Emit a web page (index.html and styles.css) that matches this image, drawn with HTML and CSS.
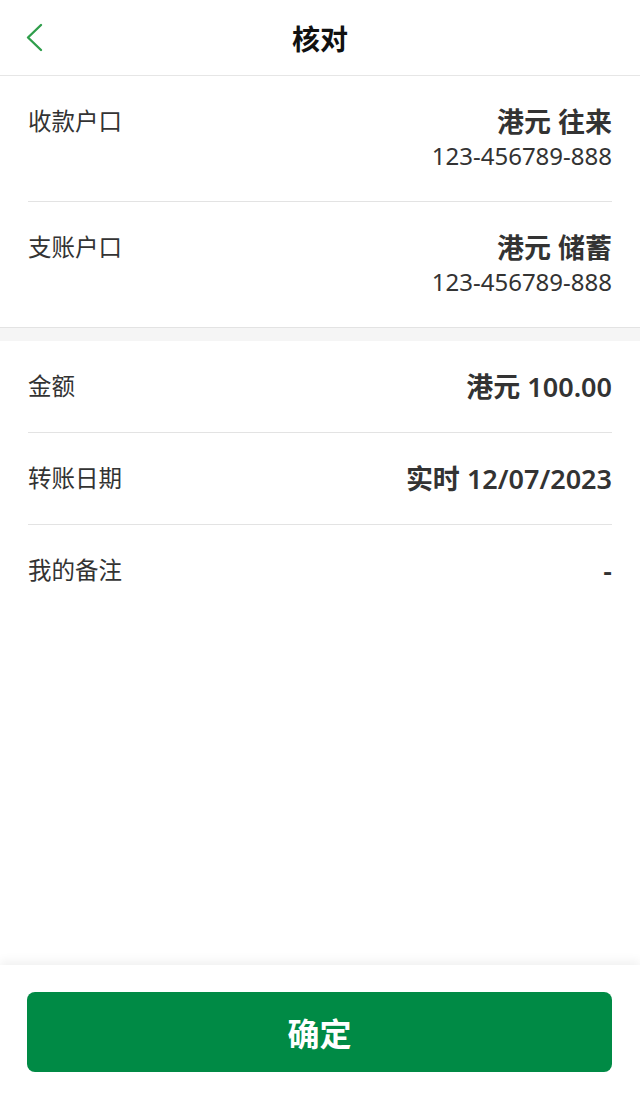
FILE: index.html
```html
<!DOCTYPE html>
<html lang="zh-CN">
<head>
  <meta charset="UTF-8">
  <meta name="viewport" content="width=device-width, initial-scale=1.0">
  <title>核对</title>
  <link rel="stylesheet" href="styles.css">
</head>
<body>
  <div class="page">
    <header class="topbar">
      <a class="back" href="#">
        <svg width="20" height="32" viewBox="0 0 20 32">
          <path d="M15 2 L2 14.5 L15 27" fill="none" stroke="#2f9e4b" stroke-width="2.4" stroke-linecap="round" stroke-linejoin="round"/>
        </svg>
      </a>
      <h1>核对</h1>
    </header>

    <section class="group">
      <div class="row">
        <span class="label">收款户口</span>
        <div class="value">
          <strong>港元 往来</strong>
          <span class="acct">123-456789-888</span>
        </div>
      </div>
      <div class="row">
        <span class="label">支账户口</span>
        <div class="value">
          <strong>港元 储蓄</strong>
          <span class="acct">123-456789-888</span>
        </div>
      </div>
    </section>

    <div class="gap"></div>

    <section class="group plain">
      <div class="row">
        <span class="label">金额</span>
        <div class="value"><strong>港元 100.00</strong></div>
      </div>
      <div class="row">
        <span class="label">转账日期</span>
        <div class="value"><strong>实时 12/07/2023</strong></div>
      </div>
      <div class="row">
        <span class="label">我的备注</span>
        <div class="value"><strong>-</strong></div>
      </div>
    </section>

    <div class="spacer"></div>

    <footer class="bottombar">
      <button class="confirm">确定</button>
    </footer>
  </div>
</body>
</html>
```

FILE: styles.css
```css
* {
  box-sizing: border-box;
}
body {
  margin: 0;
  background-color: #ffffff;
  font-family: "Noto Sans", "Noto Sans CJK SC", sans-serif;
  color: #333;
}
.page {
  display: flex;
  flex-direction: column;
  height: 1100px;
}
.topbar {
  position: relative;
  height: 76px;
  border-bottom: 1px solid #e6e6e6;
  display: flex;
  align-items: center;
  justify-content: center;
}
.topbar h1 {
  margin: 0;
  font-size: 28px;
  font-weight: bold;
  color: #111;
}
.back {
  position: absolute;
  left: 26px;
  top: 23px;
  display: block;
  line-height: 0;
}
.group {
  padding: 0 28px;
  border-bottom: 1px solid #e3e3e3;
}
.group.plain {
  border-bottom: none;
}
.row {
  display: flex;
  justify-content: space-between;
  align-items: flex-start;
  padding: 29px 0 28px;
  border-bottom: 1px solid #e3e3e3;
}
.row:last-child {
  border-bottom: none;
}
.label {
  font-size: 23.5px;
  line-height: 32px;
  color: #333;
}
.value {
  display: flex;
  flex-direction: column;
  align-items: flex-end;
  text-align: right;
}
.value strong {
  font-size: 27px;
  line-height: 34px;
  font-weight: 600;
  color: #333;
}
.acct {
  font-size: 24px;
  line-height: 34px;
  color: #333;
}
.gap {
  height: 13px;
  background-color: #f5f5f5;
}
.spacer {
  flex: 1;
}
.bottombar {
  height: 135px;
  padding: 27px 28px 0 27px;
  background-color: #ffffff;
  box-shadow: 0 -4px 10px rgba(0, 0, 0, 0.06);
}
.confirm {
  width: 100%;
  height: 80px;
  border: none;
  border-radius: 8px;
  background-color: #008a45;
  color: #ffffff;
  font-family: "Noto Sans", "Noto Sans CJK SC", sans-serif;
  font-size: 32px;
  font-weight: bold;
  cursor: pointer;
}
```
